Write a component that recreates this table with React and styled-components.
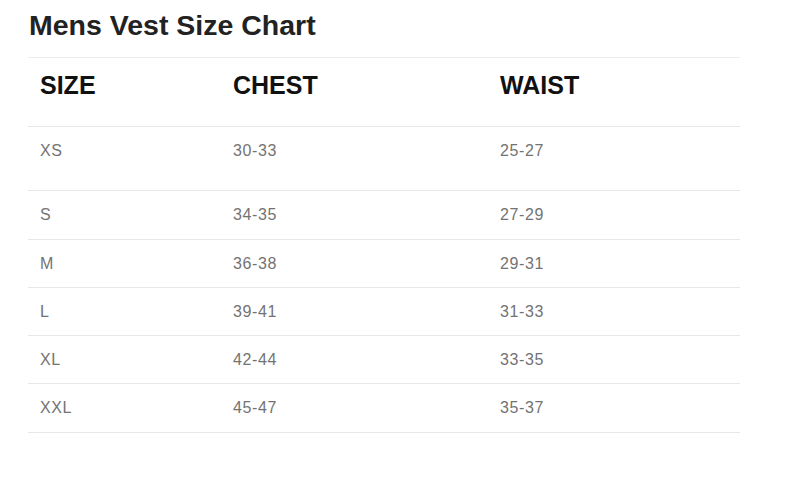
import React from 'react';
import styled, { createGlobalStyle } from 'styled-components';

const GlobalStyle = createGlobalStyle`
  * { box-sizing: border-box; }
  body {
    margin: 0;
    background: #ffffff;
    font-family: 'Liberation Sans', Arial, sans-serif;
  }
`;

const Page = styled.div`
  padding: 8px 60px 0 28px;
  width: 800px;
`;

const Title = styled.h1`
  margin: 0 0 15px 1px;
  font-size: 28.5px;
  line-height: 34px;
  font-weight: 700;
  color: #222;
`;

const Table = styled.div`
  width: 712px;
  border-top: 1px solid #ececec;
`;

const Row = styled.div`
  display: grid;
  grid-template-columns: 193px 267px 1fr;
  height: ${(p) => p.$height}px;
  border-bottom: 1px solid #e8e8e8;
  align-items: start;
`;

const HeadCell = styled.div`
  padding: 13px 12px 0;
  font-size: 25px;
  line-height: 28px;
  font-weight: 700;
  color: #111;
`;

const Cell = styled.div`
  padding: 14px 12px 0;
  font-size: 16px;
  line-height: 20px;
  color: #737373;
  letter-spacing: 0.6px;
`;

const rows = [
  ['XS', '30-33', '25-27', 64],
  ['S', '34-35', '27-29', 49],
  ['M', '36-38', '29-31', 48],
  ['L', '39-41', '31-33', 48],
  ['XL', '42-44', '33-35', 48],
  ['XXL', '45-47', '35-37', 49],
];

const App = () => (
  <>
    <GlobalStyle />
    <Page>
      <Title>Mens Vest Size Chart</Title>
      <Table>
        <Row $height={69}>
          <HeadCell>SIZE</HeadCell>
          <HeadCell>CHEST</HeadCell>
          <HeadCell>WAIST</HeadCell>
        </Row>
        {rows.map(([size, chest, waist, h]) => (
          <Row key={size} $height={h}>
            <Cell>{size}</Cell>
            <Cell>{chest}</Cell>
            <Cell>{waist}</Cell>
          </Row>
        ))}
      </Table>
    </Page>
  </>
);

export default App;
